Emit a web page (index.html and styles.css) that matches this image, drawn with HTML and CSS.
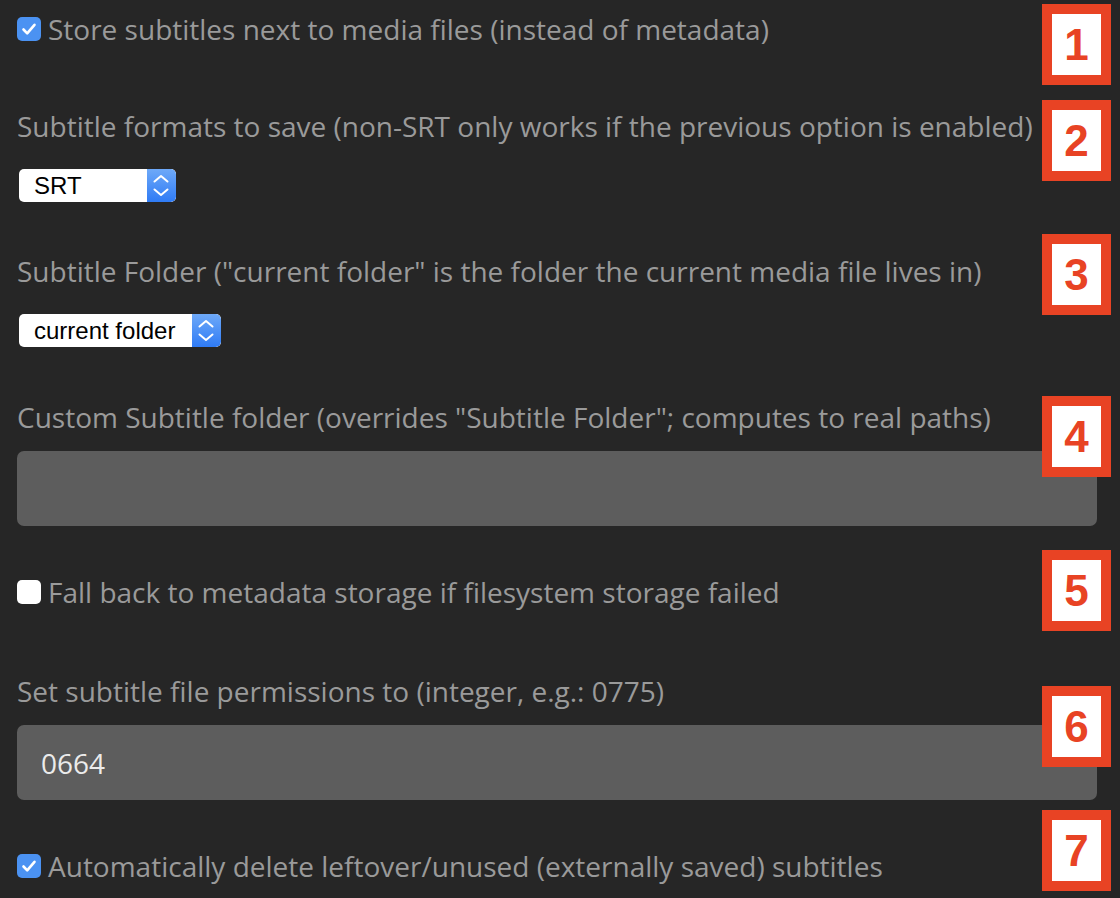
FILE: index.html
```html
<!DOCTYPE html>
<html>
<head>
<meta charset="utf-8">
<link rel="stylesheet" href="styles.css">
</head>
<body>
<div class="settings">
  <div class="check-row gap-after-check">
    <span class="checkbox checked"><svg viewBox="0 0 24 24" width="24" height="24"><path d="M6.5 12.5 L10.2 16.3 L17.5 7.8" fill="none" stroke="#fff" stroke-width="2.6" stroke-linecap="round" stroke-linejoin="round"/></svg></span>
    <span class="label">Store subtitles next to media files (instead of metadata)</span>
  </div>

  <div class="field gap-after-select">
    <div class="label">Subtitle formats to save (non-SRT only works if the previous option is enabled)</div>
    <div class="select select-srt">
      <span class="select-text">SRT</span>
      <span class="stepper"><svg viewBox="0 0 29 33" width="29" height="33"><path d="M7.5 12.5 L14 7 L20.5 12.5 M7.5 20.5 L14 26 L20.5 20.5" fill="none" stroke="#fff" stroke-width="2" stroke-linecap="round" stroke-linejoin="round"/></svg></span>
    </div>
  </div>

  <div class="field gap-after-select2">
    <div class="label">Subtitle Folder ("current folder" is the folder the current media file lives in)</div>
    <div class="select select-folder">
      <span class="select-text">current folder</span>
      <span class="stepper"><svg viewBox="0 0 29 33" width="29" height="33"><path d="M7.5 12.5 L14 7 L20.5 12.5 M7.5 20.5 L14 26 L20.5 20.5" fill="none" stroke="#fff" stroke-width="2" stroke-linecap="round" stroke-linejoin="round"/></svg></span>
    </div>
  </div>

  <div class="field gap-after-input">
    <div class="label">Custom Subtitle folder (overrides "Subtitle Folder"; computes to real paths)</div>
    <div class="text-input"></div>
  </div>

  <div class="check-row gap-after-check2">
    <span class="checkbox"></span>
    <span class="label">Fall back to metadata storage if filesystem storage failed</span>
  </div>

  <div class="field gap-after-input">
    <div class="label">Set subtitle file permissions to (integer, e.g.: 0775)</div>
    <div class="text-input"><span class="input-value">0664</span></div>
  </div>

  <div class="check-row">
    <span class="checkbox checked"><svg viewBox="0 0 24 24" width="24" height="24"><path d="M6.5 12.5 L10.2 16.3 L17.5 7.8" fill="none" stroke="#fff" stroke-width="2.6" stroke-linecap="round" stroke-linejoin="round"/></svg></span>
    <span class="label">Automatically delete leftover/unused (externally saved) subtitles</span>
  </div>
</div>

<div class="badge b1">1</div>
<div class="badge b2">2</div>
<div class="badge b3">3</div>
<div class="badge b4">4</div>
<div class="badge b5">5</div>
<div class="badge b6">6</div>
<div class="badge b7">7</div>
</body>
</html>
```

FILE: styles.css
```css
html, body {
  margin: 0;
  padding: 0;
  background: #262626;
  width: 1120px;
  height: 898px;
  overflow: hidden;
}

.settings {
  padding: 9px 0 0 17px;
  display: flex;
  flex-direction: column;
  font-family: "Open Sans", "Noto Sans", sans-serif;
  font-size: 28px;
  color: #9a9a9a;
}

.label {
  line-height: 40px;
  height: 40px;
  white-space: nowrap;
}

.check-row {
  display: flex;
  align-items: center;
  gap: 7px;
  height: 40px;
}

.gap-after-check { margin-bottom: 57px; }
.gap-after-check2 { margin-bottom: 59px; }
.gap-after-select { margin-bottom: 49px; }
.gap-after-select2 { margin-bottom: 50px; }
.gap-after-input { margin-bottom: 46px; }

.checkbox {
  width: 24px;
  height: 24px;
  border-radius: 5px;
  background: #ffffff;
  flex: none;
  display: block;
}

.checkbox.checked {
  background: #4b92f2;
}

.checkbox svg { display: block; }

.field {
  display: flex;
  flex-direction: column;
}

.select {
  margin-top: 23px;
  margin-left: 2px;
  height: 33px;
  background: #ffffff;
  border-radius: 5px;
  display: flex;
  align-items: center;
  justify-content: space-between;
  overflow: hidden;
  font-family: "Liberation Sans", Arial, sans-serif;
  font-size: 24px;
  color: #000;
}

.select-srt { width: 157px; }
.select-folder { width: 202px; }

.select-text {
  padding-left: 15px;
  line-height: 33px;
}

.stepper {
  width: 29px;
  height: 33px;
  background: linear-gradient(#6ea9f8, #2f7bf5);
  border-radius: 0 5px 5px 0;
  flex: none;
}

.stepper svg { display: block; }

.text-input {
  margin-top: 14px;
  width: 1080px;
  height: 75px;
  background: #5d5d5d;
  border-radius: 7px;
  display: flex;
  align-items: center;
  padding-left: 24px;
  box-sizing: border-box;
}

.input-value {
  color: #ebebeb;
  font-size: 28px;
}

.badge {
  position: absolute;
  left: 1042px;
  width: 69px;
  height: 81px;
  box-sizing: border-box;
  border: 10px solid #e84324;
  background: #ffffff;
  color: #e84324;
  font-family: "Liberation Sans", Arial, sans-serif;
  font-weight: bold;
  font-size: 44px;
  line-height: 61px;
  text-align: center;
}

.b1 { top: 4px; }
.b2 { top: 100px; }
.b3 { top: 234px; }
.b4 { top: 396px; }
.b5 { top: 550px; }
.b6 { top: 686px; }
.b7 { top: 810px; }
```
